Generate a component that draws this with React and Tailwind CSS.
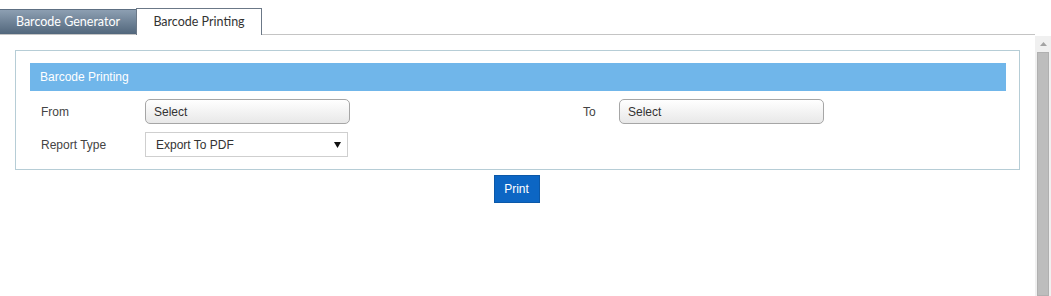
export default function App() {
  return (
    <div className="w-[1051px] h-[296px] bg-white overflow-hidden flex" style={{ fontFamily: '"Liberation Sans", Arial, sans-serif' }}>
      <div className="w-[1035px] flex flex-col">
        <div className="h-[35px] flex items-end border-b border-[#c4c4c4]">
          <div className="w-[136px] h-[25px] flex items-center justify-center text-white text-[12.5px] bg-gradient-to-b from-[#8d9fb2] to-[#52677c] border-t border-[#5d6f82]" style={{ fontFamily: 'Lato, sans-serif' }}>
            Barcode Generator
          </div>
          <div className="w-[126px] h-[27px] -mb-px flex items-center justify-center bg-white text-[#333] text-[12.5px] border border-b-0 border-[#6b7887]" style={{ fontFamily: 'Lato, sans-serif' }}>
            Barcode Printing
          </div>
        </div>
        <div className="mx-[15px] mt-[15px] w-[1005px] border border-[#b6cdd6] pt-[12px] pl-[14px] pr-[13px] pb-[12px]">
          <div className="h-[28px] bg-[#70b6ea] flex items-center pl-[10px] text-white text-[12px]">
            Barcode Printing
          </div>
          <div className="flex items-center mt-[8px] text-[12px] text-[#444]">
            <div className="w-[115px] pl-[11px]">From</div>
            <div className="w-[205px] h-[25px] rounded-[5px] border border-[#a6a6a6] bg-gradient-to-b from-white to-[#e8e8e8] flex items-center pl-[8px] text-[#333]">
              Select
            </div>
            <div className="w-[233px]"></div>
            <div className="w-[36px]">To</div>
            <div className="w-[205px] h-[25px] rounded-[5px] border border-[#a6a6a6] bg-gradient-to-b from-white to-[#e8e8e8] flex items-center pl-[8px] text-[#333]">
              Select
            </div>
          </div>
          <div className="flex items-center mt-[8px] text-[12px] text-[#444]">
            <div className="w-[115px] pl-[11px]">Report Type</div>
            <div className="w-[203px] h-[25px] border border-[#cfcfcf] bg-white flex items-center justify-between pl-[10px] pr-[6px] text-[#333]">
              <span>Export To PDF</span>
              <svg width="7" height="7" viewBox="0 0 7 7"><path d="M0 1 L7 1 L3.5 7 Z" fill="#111" /></svg>
            </div>
          </div>
        </div>
        <div className="w-[1035px] flex justify-center pr-[2px] mt-[5px]">
          <div className="w-[46px] h-[28px] bg-[#0c66c4] border border-[#0b58a8] text-white text-[12px] flex items-center justify-center">
            Print
          </div>
        </div>
      </div>
      <div className="w-[16px] mt-[36px] bg-[#f0f0f0] flex flex-col items-center">
        <div className="h-[16px] flex items-center justify-center">
          <svg width="7" height="4" viewBox="0 0 7 4"><path d="M0 4 L3.5 0 L7 4 Z" fill="#a3a3a3" /></svg>
        </div>
        <div className="w-[12px] flex-1 bg-[#bdbdbd] border border-[#b0b0b0]"></div>
      </div>
    </div>
  );
}
